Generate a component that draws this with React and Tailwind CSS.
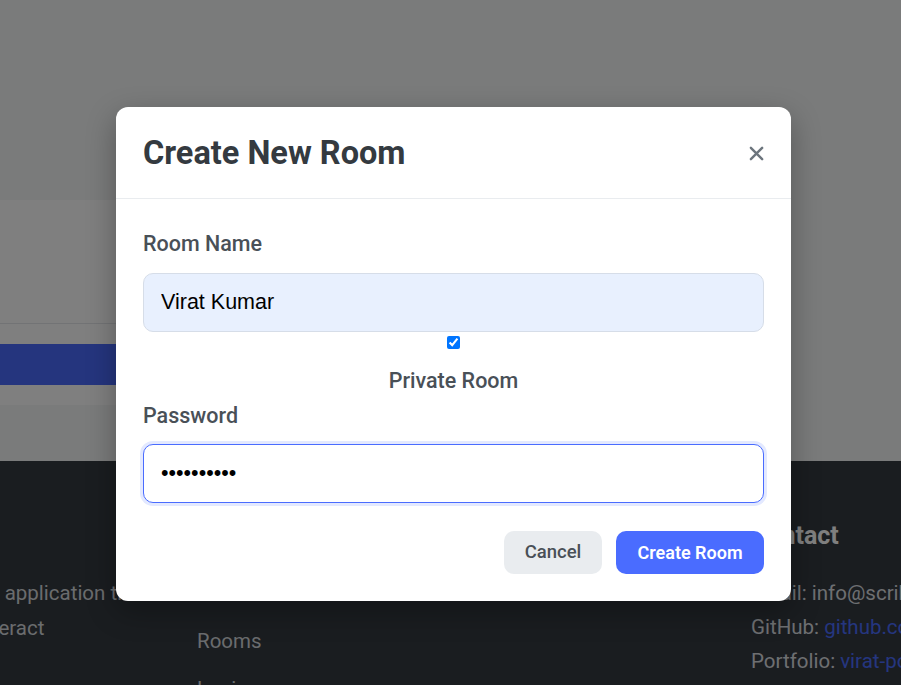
import React, { useState } from "react";

const ui = { fontFamily: "Roboto, 'Liberation Sans', sans-serif" };
const field = { fontFamily: "'Liberation Sans', Arial, sans-serif" };

function Footer() {
  return (
    <footer className="bg-[#343a40] pt-[60px] pb-[40px]" style={ui}>
      <div className="grid grid-cols-4 w-[1108px] -ml-[80px]">
        <div>
          <h4 className="text-[25px] leading-[30px] font-bold text-white">Chat</h4>
          <p className="mt-[25px] text-[20.5px] leading-[35px] text-[#d4d8dc] whitespace-nowrap">
            A secure application that lets
            <br />
            users interact
          </p>
        </div>
        <div>
          <h4 className="text-[25px] leading-[30px] font-bold text-white">Quick Links</h4>
          <ul className="mt-[25px] text-[20.5px] leading-[34px] text-[#d4d8dc] space-y-[14px]">
            <li>Home</li>
            <li>Rooms</li>
            <li>Login</li>
          </ul>
        </div>
        <div>
          <h4 className="text-[25px] leading-[30px] font-bold text-white">Resources</h4>
        </div>
        <div>
          <h4 className="text-[25px] leading-[30px] font-bold text-white">Contact</h4>
          <ul className="mt-[25px] text-[20.5px] leading-[34px] text-[#dcdfe2] whitespace-nowrap">
            <li>Email: info@scribble.chat</li>
            <li>
              GitHub: <span className="text-[#4a6cff]">github.com/virat</span>
            </li>
            <li>
              Portfolio: <span className="text-[#4a6cff]">virat-portfolio.dev</span>
            </li>
          </ul>
        </div>
      </div>
    </footer>
  );
}

function CloseIcon() {
  return (
    <svg width="15" height="15" viewBox="0 0 16 16" fill="none">
      <path d="M2 2L14 14M14 2L2 14" stroke="#6c757d" strokeWidth="2.6" strokeLinecap="round" />
    </svg>
  );
}

export default function App() {
  const [name, setName] = useState("Virat Kumar");
  const [isPrivate, setIsPrivate] = useState(true);
  const [password, setPassword] = useState("1234567890");

  return (
    <div className="relative h-[685px] bg-[#f5f6f7] overflow-hidden">
      {/* page behind the modal */}
      <main className="pt-[200px] pb-[56px]">
        <div className="-ml-[30px] w-[470px] bg-white rounded-lg">
          <div className="h-[123px]" />
          <div className="border-t border-[#e5e7eb] p-[20px]">
            <div className="h-[41px] rounded-md bg-[#4b6afc]" />
          </div>
        </div>
      </main>
      <Footer />

      {/* overlay */}
      <div className="absolute inset-0 bg-black/50">
        <div
          className="ml-[116px] mt-[107px] w-[675px] bg-white rounded-[12px] shadow-[0_10px_30px_rgba(0,0,0,0.3)]"
          style={ui}
        >
          <div className="flex items-center justify-between px-[27px] pt-[28px] pb-[27px] border-b border-[#e9ecef]">
            <h2 className="text-[32.5px] leading-[36px] font-bold text-[#343a40]">Create New Room</h2>
            <button className="w-[20px] h-[20px] flex items-center justify-center mr-[-2px]">
              <CloseIcon />
            </button>
          </div>

          <div className="px-[27px] pt-[30px] pb-[27px]">
            <label className="block text-[21.5px] leading-[30px] font-medium text-[#495057]">Room Name</label>
            <input
              value={name}
              onChange={(e) => setName(e.target.value)}
              className="mt-[14px] w-full h-[59px] px-[17px] rounded-[10px] border border-[#d6dde8] bg-[#e8f0fe] text-[21.5px] text-black outline-none"
              style={field}
            />

            <div className="mt-[4px] flex justify-center h-[13px]">
              <input
                type="checkbox"
                checked={isPrivate}
                onChange={(e) => setIsPrivate(e.target.checked)}
                className="w-[13px] h-[13px] m-0"
              />
            </div>
            <label className="mt-[17px] block text-center text-[21.5px] leading-[30px] font-medium text-[#495057]">
              Private Room
            </label>

            <label className="mt-[5px] block text-[21.5px] leading-[30px] font-medium text-[#495057]">Password</label>
            <input
              type="password"
              value={password}
              onChange={(e) => setPassword(e.target.value)}
              className="mt-[13px] w-full h-[59px] px-[17px] rounded-[10px] border border-[#4a6cff] bg-white text-[21.5px] text-black outline-none shadow-[0_0_0_3px_#e3e9ff]"
              style={field}
            />

            <div className="mt-[28px] flex justify-end gap-[14px]">
              <button className="w-[98px] h-[43px] rounded-[10px] bg-[#e9ecef] text-[18.5px] font-medium text-[#495057]">
                Cancel
              </button>
              <button className="w-[148px] h-[43px] rounded-[10px] bg-[#4a6cff] text-[18px] font-semibold text-white">
                Create Room
              </button>
            </div>
          </div>
        </div>
      </div>
    </div>
  );
}
